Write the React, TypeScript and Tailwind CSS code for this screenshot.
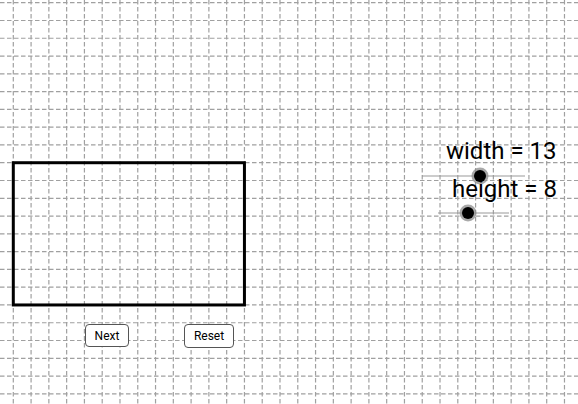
import React from 'react';

const STEP = 17.78;
const X0 = 13.3;
const Y0 = 2.7;

function Grid() {
  const xs: number[] = [];
  const ys: number[] = [];
  for (let k = -1; X0 + k * STEP < 580; k++) xs.push(X0 + k * STEP);
  for (let k = -1; Y0 + k * STEP < 406; k++) ys.push(Y0 + k * STEP);
  return (
    <g stroke="#a0a0a0" strokeWidth={1.2} strokeDasharray="4.5 2.5">
      {xs.map((x) => (
        <line key={'v' + x} x1={x} y1={0} x2={x} y2={404} />
      ))}
      {ys.map((y) => (
        <line key={'h' + y} x1={0} y1={y} x2={578} y2={y} />
      ))}
    </g>
  );
}

function Slider({ x1, x2, y, knob }: { x1: number; x2: number; y: number; knob: number }) {
  return (
    <g>
      <line x1={x1} y1={y} x2={x2} y2={y} stroke="#9a9a9a" strokeWidth={1.2} />
      <circle cx={knob} cy={y} r={8.5} fill="#8c8c8c" opacity={0.75} />
      <circle cx={knob} cy={y} r={6} fill="#000" />
    </g>
  );
}

export default function App() {
  return (
    <div className="relative w-[578px] h-[404px] bg-white overflow-hidden font-['Roboto',sans-serif]">
      <svg width={578} height={404} className="absolute inset-0">
        <Grid />
        <rect
          x={X0}
          y={Y0 + 9 * STEP}
          width={13 * STEP}
          height={8 * STEP}
          fill="none"
          stroke="#000"
          strokeWidth={3}
        />
        <Slider x1={422} x2={525} y={176} knob={480} />
        <Slider x1={438} x2={509} y={213} knob={468} />
      </svg>

      {/* slider captions */}
      <div className="absolute left-[446px] top-[137px] text-[24px] leading-[28px] text-black whitespace-nowrap">
        width = 13
      </div>
      <div className="absolute left-[452px] top-[175px] text-[24px] leading-[28px] text-black whitespace-nowrap">
        height = 8
      </div>

      {/* buttons */}
      <button className="absolute left-[85px] top-[324px] w-[44px] h-[23px] bg-white border-[1.5px] border-[#555] rounded-[4px] text-[12px] text-black flex items-center justify-center">
        Next
      </button>
      <button className="absolute left-[184px] top-[324px] w-[50px] h-[24px] bg-white border-[1.5px] border-[#555] rounded-[4px] text-[12px] text-black flex items-center justify-center">
        Reset
      </button>
    </div>
  );
}
